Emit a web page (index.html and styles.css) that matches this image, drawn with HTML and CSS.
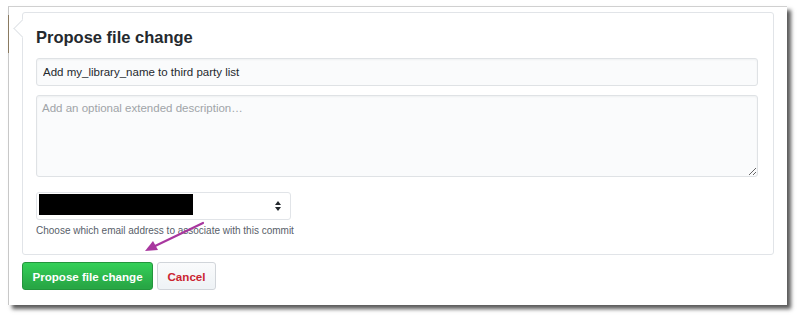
FILE: index.html
```html
<!DOCTYPE html>
<html>
<head>
    <title>Propose file change</title>
    <link rel="stylesheet" href="styles.css">
</head>
<body>
    <div class="window">
        <div class="avatar-edge"></div>
        <div class="commit-box">
            <h2>Propose file change</h2>
            <input type="text" class="form-control" value="Add my_library_name to third party list">
            <textarea class="form-control comment" placeholder="Add an optional extended description…"></textarea>
            <div class="email-select">
                <span class="redacted"></span>
                <svg class="select-arrows" width="8" height="12" viewBox="0 0 8 12">
                    <path d="M4 1 L7 5 H1 Z M4 11 L7 7 H1 Z" fill="#24292e"/>
                </svg>
            </div>
            <p class="note">Choose which email address to associate with this commit</p>
        </div>
        <div class="actions">
            <button class="btn btn-primary">Propose file change</button>
            <button class="btn btn-cancel">Cancel</button>
        </div>
        <svg class="annotation" width="70" height="36" viewBox="0 0 70 36">
            <line x1="64" y1="3" x2="14" y2="27" stroke="#a8379f" stroke-width="2.2" stroke-linecap="round"/>
            <path d="M6 31 L14 21 L19 30 Z" fill="#a8379f"/>
        </svg>
    </div>
</body>
</html>
```

FILE: styles.css
```css
body {
    margin: 0;
    padding-bottom: 12px;
    background: #fff;
    font-family: "Liberation Sans", Arial, sans-serif;
    color: #24292e;
}
.window {
    position: relative;
    margin: 6px 0 0 8px;
    width: 779px;
    height: 299px;
    border-top: 1px solid #d0d0d0;
    border-left: 1px solid #c8c8c8;
    background: #fff;
    box-shadow: 4px 4px 4px rgba(0, 0, 0, 0.65);
    padding: 5px 0 0 13px;
    box-sizing: border-box;
}
.avatar-edge {
    position: absolute;
    left: -1px;
    top: 8px;
    width: 1px;
    height: 38px;
    background: #8a7a60;
}
.commit-box {
    position: relative;
    width: 752px;
    height: 243px;
    border: 1px solid #e1e4e8;
    border-radius: 3px;
    padding: 14px 14px 0 13px;
    box-sizing: border-box;
}
.commit-box::before {
    content: "";
    position: absolute;
    left: -7px;
    top: 9px;
    width: 12px;
    height: 12px;
    background: #fff;
    border-left: 1px solid #e1e4e8;
    border-bottom: 1px solid #e1e4e8;
    transform: rotate(45deg);
}
h2 {
    margin: 0 0 11px;
    font-size: 16.5px;
    font-weight: bold;
    line-height: 20px;
    color: #24292e;
}
.form-control {
    display: block;
    width: 722px;
    box-sizing: border-box;
    background: #fafbfc;
    border: 1px solid #dfe2e5;
    border-radius: 3px;
    font-family: "Liberation Sans", Arial, sans-serif;
    font-size: 11.5px;
    color: #24292e;
    padding: 5px 6px;
    box-shadow: inset 0 1px 2px rgba(27, 31, 35, 0.05);
}
input.form-control {
    height: 28px;
}
.comment {
    margin-top: 9px;
    height: 82px;
    resize: vertical;
    padding: 6px 5px;
}
.comment::placeholder {
    color: #a0a4a8;
}
.email-select {
    display: flex;
    align-items: center;
    justify-content: space-between;
    margin-top: 15px;
    width: 255px;
    height: 28px;
    box-sizing: border-box;
    border: 1px solid #e1e4e8;
    border-radius: 3px;
    padding: 0 8px 0 2px;
    background: #fff;
}
.redacted {
    display: block;
    width: 154px;
    height: 21px;
    background: #000;
    margin-top: -3px;
}
.note {
    margin: 5px 0 0;
    font-size: 10px;
    color: #586069;
}
.actions {
    display: flex;
    gap: 4px;
    margin-top: 7px;
}
.btn {
    height: 28px;
    padding: 0 4px;
    border-radius: 3px;
    font-family: "Liberation Sans", Arial, sans-serif;
    font-size: 11.6px;
    font-weight: bold;
    white-space: nowrap;
    cursor: pointer;
}
.btn-primary {
    width: 131px;
    color: #fff;
    background: linear-gradient(#34d058, #28a745 90%);
    border: 1px solid #23953c;
}
.btn-cancel {
    width: 59px;
    color: #cb2431;
    background: linear-gradient(#fafbfc, #eff3f6 90%);
    border: 1px solid #d1d5da;
}
.annotation {
    position: absolute;
    left: 130px;
    top: 213px;
}
```
